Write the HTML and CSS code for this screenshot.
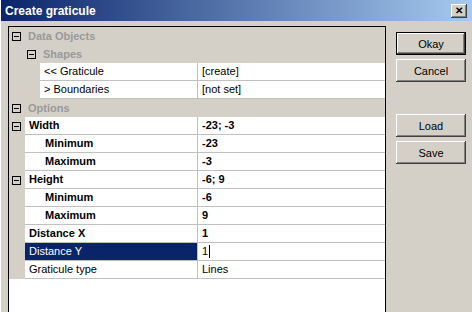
FILE: index.html
```html
<!DOCTYPE html>
<html lang="en">
<head>
  <meta charset="UTF-8">
  <title>Create graticule</title>
  <link rel="stylesheet" href="styles.css">
</head>
<body>
  <div class="window">
    <div class="titlebar">
      <span class="title">Create graticule</span>
      <span class="close">&#x2715;</span>
    </div>

    <div class="content">
      <div class="grid">
        <div class="row cat">
          <span class="margin"><i class="box"></i></span>
          <span class="cat-name">Data Objects</span>
        </div>
        <div class="row cat">
          <span class="margin deep"><i class="box"></i></span>
          <span class="cat-name">Shapes</span>
        </div>
        <div class="row">
          <span class="margin deep"></span>
          <span class="name">&lt;&lt; Graticule</span>
          <span class="value">[create]</span>
        </div>
        <div class="row">
          <span class="margin deep"></span>
          <span class="name">&gt; Boundaries</span>
          <span class="value">[not set]</span>
        </div>
        <div class="row cat">
          <span class="margin"><i class="box"></i></span>
          <span class="cat-name">Options</span>
        </div>
        <div class="row bold">
          <span class="margin"><i class="box"></i></span>
          <span class="name">Width</span>
          <span class="value">-23; -3</span>
        </div>
        <div class="row bold">
          <span class="margin"></span>
          <span class="name child">Minimum</span>
          <span class="value">-23</span>
        </div>
        <div class="row bold">
          <span class="margin"></span>
          <span class="name child">Maximum</span>
          <span class="value">-3</span>
        </div>
        <div class="row bold">
          <span class="margin"><i class="box"></i></span>
          <span class="name">Height</span>
          <span class="value">-6; 9</span>
        </div>
        <div class="row bold">
          <span class="margin"></span>
          <span class="name child">Minimum</span>
          <span class="value">-6</span>
        </div>
        <div class="row bold">
          <span class="margin"></span>
          <span class="name child">Maximum</span>
          <span class="value">9</span>
        </div>
        <div class="row bold">
          <span class="margin"></span>
          <span class="name">Distance X</span>
          <span class="value">1</span>
        </div>
        <div class="row selected">
          <span class="margin"></span>
          <span class="name">Distance Y</span>
          <span class="value">1<span class="caret"></span></span>
        </div>
        <div class="row">
          <span class="margin"></span>
          <span class="name">Graticule type</span>
          <span class="value">Lines</span>
        </div>
      </div>

      <div class="buttons">
        <button class="btn default">Okay</button>
        <button class="btn">Cancel</button>
        <button class="btn spaced">Load</button>
        <button class="btn">Save</button>
      </div>
    </div>
  </div>
</body>
</html>
```

FILE: styles.css
```css
:root {
  --face: #d4d0c8;
  --shadow: #808080;
  --dark: #404040;
  --line: #c0c0c0;
  --select: #0a246a;
}

html, body {
  margin: 0;
  height: 100%;
  overflow: hidden;
}

body {
  font-family: 'Liberation Sans', Arial, sans-serif;
  font-size: 11px;
  background: var(--face);
  color: #000;
}

.window {
  height: 100%;
  border-left: 1px solid #fff;
}

.titlebar {
  height: 21px;
  display: flex;
  align-items: center;
  justify-content: space-between;
  padding: 0 5px 0 4px;
  background: linear-gradient(to right, #0a246a, #a6caf0);
}

.title {
  color: #fff;
  font-weight: bold;
  font-size: 12px;
}

.close {
  width: 16px;
  height: 14px;
  display: flex;
  align-items: center;
  justify-content: center;
  background: var(--face);
  box-shadow: inset -1px -1px var(--dark), inset 1px 1px #fff, inset -2px -2px var(--shadow);
  font-size: 10px;
  font-weight: bold;
}

.content {
  display: flex;
  gap: 10px;
  padding: 5px 0 0 7px;
}

/* property grid */

.grid {
  width: 376px;
  height: 285px;
  border: 1px solid #000;
  border-bottom: none;
  background: #fff;
}

.row {
  display: flex;
  height: 18px;
}

.margin {
  width: 16px;
  flex: none;
  display: flex;
  align-items: center;
  padding-left: 3px;
  box-sizing: border-box;
  background: var(--face);
}

.margin.deep {
  width: 31px;
  padding-left: 18px;
}

.box {
  position: relative;
  width: 9px;
  height: 9px;
  box-sizing: border-box;
  border: 1px solid #000;
}

.box::after {
  content: '';
  position: absolute;
  left: 1px;
  top: 3px;
  width: 5px;
  height: 1px;
  background: #000;
}

.cat {
  background: var(--face);
}

.cat-name {
  flex: 1;
  padding-left: 3px;
  line-height: 18px;
  font-weight: bold;
  color: #999;
}

.name,
.value {
  height: 17px;
  line-height: 17px;
  border-bottom: 1px solid var(--line);
  white-space: nowrap;
}

.name {
  flex: 1;
  padding-left: 4px;
}

.name.child {
  padding-left: 20px;
}

.value {
  width: 183px;
  flex: none;
  padding-left: 4px;
  border-left: 1px solid var(--line);
  display: flex;
  align-items: center;
}

.bold {
  font-weight: bold;
}

.selected .name {
  background: var(--select);
  color: #fff;
}

.caret {
  display: inline-block;
  width: 1px;
  height: 13px;
  margin-left: 1px;
  background: #000;
}

/* buttons */

.buttons {
  display: flex;
  flex-direction: column;
  gap: 4px;
  padding-top: 6px;
}

.btn {
  width: 70px;
  height: 23px;
  padding: 0;
  border: none;
  background: var(--face);
  font-family: inherit;
  font-size: 11px;
  color: #000;
  box-shadow: inset -1px -1px var(--dark), inset 1px 1px #fff, inset -2px -2px var(--shadow);
}

.btn.default {
  border: 1px solid #000;
}

.btn.spaced {
  margin-top: 28px;
}
```
